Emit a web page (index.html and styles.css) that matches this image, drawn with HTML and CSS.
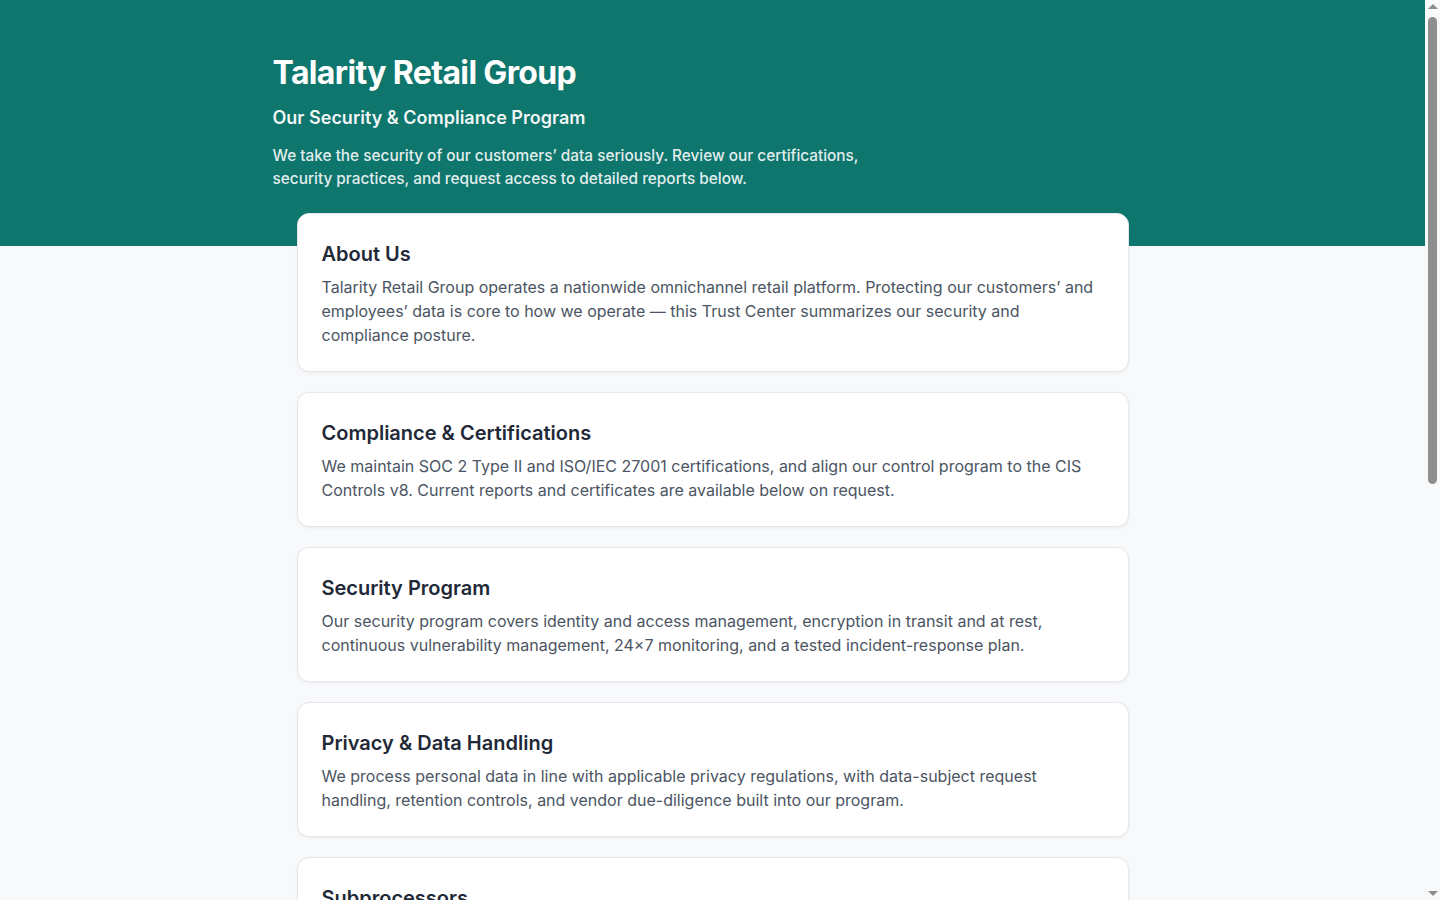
FILE: index.html
```html
<!DOCTYPE html>
<html lang="en">

<head>
    <meta charset="UTF-8" />
    <title>Talarity Retail Group - Trust Center</title>
    <link rel="stylesheet" href="styles.css">
</head>

<body>
    <header class="hero">
        <div class="hero-inner">
            <h1>Talarity Retail Group</h1>
            <h2 class="hero-sub">Our Security &amp; Compliance Program</h2>
            <p class="hero-text">We take the security of our customers’ data seriously. Review our certifications,
                security practices, and request access to detailed reports below.</p>
        </div>
    </header>

    <main class="content">
        <section class="card">
            <h2>About Us</h2>
            <p>Talarity Retail Group operates a nationwide omnichannel retail platform. Protecting our customers’ and
                employees’ data is core to how we operate — this Trust Center summarizes our security and compliance
                posture.</p>
        </section>

        <section class="card">
            <h2>Compliance &amp; Certifications</h2>
            <p>We maintain SOC 2 Type II and ISO/IEC 27001 certifications, and align our control program to the CIS
                Controls v8. Current reports and certificates are available below on request.</p>
        </section>

        <section class="card">
            <h2>Security Program</h2>
            <p>Our security program covers identity and access management, encryption in transit and at rest,
                continuous vulnerability management, 24×7 monitoring, and a tested incident-response plan.</p>
        </section>

        <section class="card">
            <h2>Privacy &amp; Data Handling</h2>
            <p>We process personal data in line with applicable privacy regulations, with data-subject request
                handling, retention controls, and vendor due-diligence built into our program.</p>
        </section>

        <section class="card">
            <h2>Subprocessors</h2>
            <p>We rely on a small set of vetted subprocessors for hosting, payments, and customer support. A current
                list is available on request.</p>
        </section>

        <section class="card">
            <h2>Reports &amp; Documents</h2>
            <p>SOC 2 Type II report, ISO/IEC 27001 certificate, penetration test summary, and our information security
                policy overview.</p>
        </section>

        <section class="card">
            <h2>Request Access</h2>
            <p>To review our SOC 2 report or ISO certificate, submit a request and our security team will follow up
                under NDA.</p>
        </section>
    </main>

    <!-- page scrollbar, drawn over the right edge -->
    <div class="scrollbar">
        <span class="arrow arrow-up"></span>
        <div class="track">
            <div class="thumb"></div>
        </div>
        <span class="arrow arrow-down"></span>
    </div>
</body>

</html>
```

FILE: styles.css
```css
body {
    margin: 0;
    padding-right: 15px;
    background-color: #f8f9fb;
    font-family: Inter, "Noto Sans", Arial, sans-serif;
    color: #1f2937;
}

/* teal banner at the top */
.hero {
    background-color: #0f766e;
    color: #ffffff;
    padding: 53px 24px 56px;
}

.hero-inner {
    max-width: 880px;
    margin: 0 auto;
}

.hero h1 {
    margin: 0 0 11px;
    font-size: 32px;
    line-height: 40px;
    font-weight: 700;
    letter-spacing: -0.02em;
}

.hero-sub {
    margin: 0 0 12px;
    font-size: 18px;
    line-height: 28px;
    font-weight: 600;
    color: rgba(255, 255, 255, 0.94);
}

.hero-text {
    margin: 0;
    max-width: 600px;
    font-size: 15.36px;
    line-height: 23px;
    font-weight: 500;
    color: rgba(255, 255, 255, 0.9);
}

.content {
    max-width: 832px;
    margin: -33px auto 0;
    padding: 0 24px 40px;
    display: flex;
    flex-direction: column;
    gap: 20px;
}

.card {
    background-color: #ffffff;
    border: 1px solid #e5e7eb;
    border-radius: 12px;
    padding: 25px 24px 24px;
    box-shadow: 0 1px 3px rgba(0, 0, 0, 0.06);
}

.card h2 {
    margin: 0 0 6px;
    font-size: 20px;
    line-height: 30px;
    font-weight: 600;
    color: #1f2937;
}

.card p {
    margin: 0;
    font-size: 16px;
    line-height: 24px;
    color: #4b5563;
}

/* fake classic scrollbar */
.scrollbar {
    position: fixed;
    top: 0;
    right: 0;
    width: 15px;
    height: 100%;
    background-color: #f8f9fb;
    display: flex;
    flex-direction: column;
    align-items: center;
}

.arrow {
    width: 0;
    height: 0;
    border-left: 5px solid transparent;
    border-right: 5px solid transparent;
    margin: 4px 0;
}

.arrow-up {
    border-bottom: 5px solid #8c8c8c;
}

.arrow-down {
    border-top: 5px solid #8c8c8c;
}

.track {
    flex: 1;
    width: 100%;
    display: flex;
    justify-content: center;
    padding-top: 4px;
}

.thumb {
    width: 9px;
    height: 467px;
    background-color: #8f8f8f;
    border-radius: 5px;
}
```
